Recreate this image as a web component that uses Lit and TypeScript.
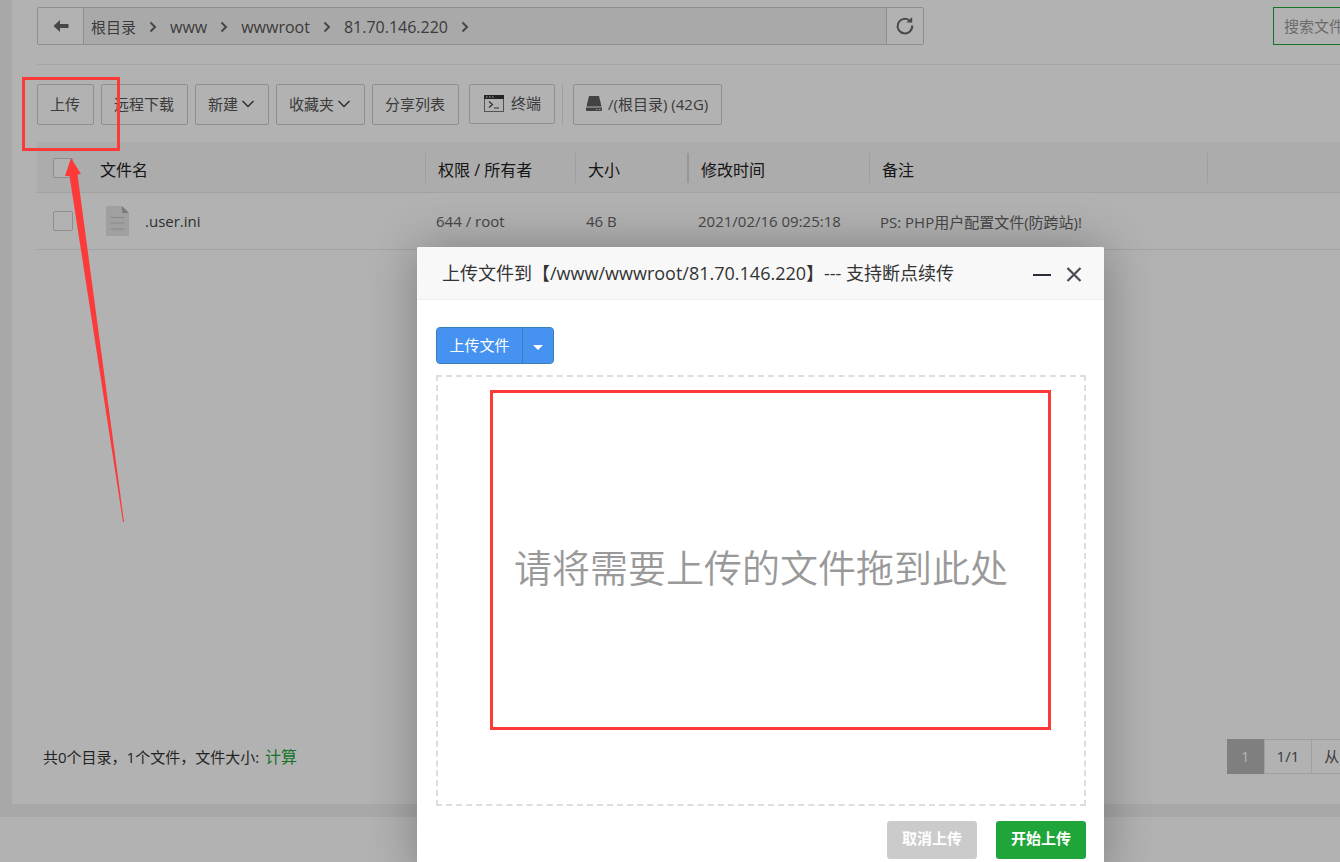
import { LitElement, html, css, svg } from "lit";
import { customElement, property, state } from "lit/decorators.js";

const chevronRight = html`<svg class="sep" width="8" height="12" viewBox="0 0 8 12" aria-hidden="true">
  <path d="M1.5 1.5 6 6 1.5 10.5" fill="none" stroke="#666" stroke-width="2" />
</svg>`;

const chevronDown = html`<svg class="caret" width="14" height="10" viewBox="0 0 14 10" aria-hidden="true">
  <path d="M1.5 2 7 7.5 12.5 2" fill="none" stroke="#444" stroke-width="1.5" />
</svg>`;

interface FileRow {
  name: string;
  owner: string;
  size: string;
  time: string;
  note: string;
}

const fontStack = css`"Open Sans", "Noto Sans CJK SC", sans-serif`;

@customElement("upload-dialog")
export class UploadDialog extends LitElement {
  @property() path = "";

  static styles = css`
    :host {
      display: block;
      box-sizing: border-box;
      background: #fff;
      border-radius: 2px;
      box-shadow: 1px 1px 50px rgba(0, 0, 0, 0.3);
      font-family: ${fontStack};
      color: #333;
    }
    button {
      font: inherit;
      margin: 0;
      padding: 0;
      border: 0;
      cursor: pointer;
    }
    header {
      display: flex;
      align-items: center;
      height: 52px;
      padding: 0 19px 0 25px;
      background: #f8f8f8;
      border-bottom: 1px solid #eee;
      border-radius: 2px 2px 0 0;
    }
    h2 {
      flex: 1;
      margin: 0;
      font-size: 18px;
      font-weight: 400;
      line-height: 52px;
      white-space: nowrap;
    }
    .tool {
      display: flex;
      align-items: center;
      justify-content: center;
      width: 22px;
      height: 22px;
      margin-left: 10px;
      background: none;
    }
    .body {
      padding: 27px 18px 16px 19px;
    }
    .split {
      display: inline-flex;
      vertical-align: top;
      height: 37px;
      box-sizing: border-box;
      border: 1px solid #3a7fb5;
      border-radius: 4px;
      background: #4592f0;
      overflow: hidden;
    }
    .split button {
      color: #fff;
      background: #4592f0;
      font-size: 15px;
    }
    .pick {
      width: 85px;
      padding-bottom: 2px;
    }
    .more {
      display: flex;
      align-items: center;
      justify-content: center;
      width: 31px;
    }
    .split .more {
      padding-top: 3px;
      border-left: 1px solid #3a7fb5;
    }
    .drop {
      display: flex;
      align-items: center;
      justify-content: center;
      box-sizing: border-box;
      height: 431px;
      margin-top: 11px;
      padding: 0 0 50px;
      border: 2px dashed #ddd;
      color: #999;
      font-size: 38px;
      font-weight: 350;
      white-space: nowrap;
    }
    footer {
      display: flex;
      justify-content: flex-end;
      gap: 19px;
      margin-top: 15px;
    }
    footer button {
      width: 90px;
      height: 38px;
      padding-bottom: 5px;
      border-radius: 3px;
      color: #fff;
      font-size: 15px;
      font-weight: 700;
      background: #20a53a;
    }
    footer .cancel {
      background: #cbcbcb;
    }
  `;

  render() {
    return html`
      <header>
        <h2>上传文件到【${this.path}】--- 支持断点续传</h2>
        <button class="tool" aria-label="最小化">
          <svg width="20" height="20" viewBox="0 0 20 20">
            <path d="M1 12H19" stroke="#2d2c3b" stroke-width="2" />
          </svg>
        </button>
        <button class="tool" aria-label="关闭">
          <svg width="20" height="20" viewBox="0 0 20 20">
            <path d="M3.5 5 16.5 18M16.5 5 3.5 18" stroke="#4b4a57" stroke-width="2.2" />
          </svg>
        </button>
      </header>
      <div class="body">
        <div class="split">
          <button class="pick">上传文件</button>
          <button class="more" aria-label="更多上传方式">
            <svg width="10" height="5" viewBox="0 0 10 5"><path d="M0 0H10L5 5Z" fill="#fff" /></svg>
          </button>
        </div>
        <div class="drop">请将需要上传的文件拖到此处</div>
        <footer>
          <button class="cancel">取消上传</button>
          <button>开始上传</button>
        </footer>
      </div>
    `;
  }
}

@customElement("app-root")
export class AppRoot extends LitElement {
  @state() private crumbs = ["根目录", "www", "wwwroot", "81.70.146.220"];
  @state() private files: FileRow[] = [
    {
      name: ".user.ini",
      owner: "644 / root",
      size: "46 B",
      time: "2021/02/16 09:25:18",
      note: "PS: PHP用户配置文件(防跨站)!",
    },
  ];

  static styles = css`
    :host {
      display: flex;
      flex-direction: column;
      position: relative;
      height: 100vh;
      overflow: hidden;
      background: #f1f1f1;
      font-family: ${fontStack};
      font-size: 15px;
      color: #555;
    }
    button,
    input {
      font: inherit;
      color: inherit;
      margin: 0;
    }
    a {
      color: inherit;
      text-decoration: none;
    }
    .panel {
      flex: 1;
      display: flex;
      flex-direction: column;
      box-sizing: border-box;
      width: calc(100% + 148px);
      margin: 0 0 13px 12px;
      padding: 7px 0 30px 25px;
      background: #fff;
    }
    .top {
      display: flex;
      justify-content: space-between;
      padding-bottom: 19px;
      border-bottom: 1px solid #ececec;
    }
    .path {
      display: flex;
      box-sizing: border-box;
      width: 887px;
      height: 38px;
      border: 1px solid #ccc;
      border-radius: 2px;
      background: #f3f3f3;
    }
    .path button {
      display: flex;
      align-items: center;
      justify-content: center;
      padding: 0;
      border: 0;
      background: #fff;
    }
    .path .back {
      width: 46px;
      border-right: 1px solid #ccc;
    }
    .path .reload {
      width: 37px;
      border-left: 1px solid #ccc;
    }
    .crumbs {
      flex: 1;
      display: flex;
      align-items: center;
      gap: 13px;
      padding: 1px 0 0 7px;
      font-size: 16px;
    }
    .crumbs a:first-child {
      font-size: 15px;
    }
    .search {
      box-sizing: border-box;
      width: 227px;
      height: 38px;
      padding: 0 10px;
      border: 1px solid #20a53a;
      outline: 0;
      background: #fff;
    }
    .search::placeholder {
      color: #999;
      opacity: 1;
    }
    .tools {
      display: flex;
      gap: 7px;
      padding: 19px 0 17px;
    }
    .btn {
      display: flex;
      align-items: center;
      box-sizing: border-box;
      height: 41px;
      padding: 0 13px 2px 12px;
      border: 1px solid #ccc;
      border-radius: 2px;
      background: #fff;
      white-space: nowrap;
      line-height: 20px;
    }
    .btn .caret {
      margin-left: 3px;
    }
    .term {
      height: 40px;
      margin-left: 3px;
      padding-left: 14px;
      gap: 7px;
    }
    .rule {
      width: 1px;
      margin-right: 3px;
      background: #e6e6e6;
    }
    .disk {
      gap: 6px;
    }
    table {
      width: 100%;
      table-layout: fixed;
      border-collapse: collapse;
    }
    .c-check {
      width: 57px;
    }
    .c-name {
      width: 331px;
    }
    .c-owner {
      width: 150px;
    }
    .c-size {
      width: 112px;
    }
    .c-time {
      width: 182px;
    }
    .c-note {
      width: 338px;
    }
    th,
    td {
      padding: 0;
      text-align: left;
      font-weight: 400;
      border-bottom: 1px solid #e8e8e8;
      white-space: nowrap;
    }
    th {
      box-sizing: border-box;
      height: 50px;
      padding-top: 3px;
      background: #f6f6f6;
      color: #222;
      font-size: 16px;
    }
    td {
      height: 56px;
      color: #666;
    }
    th:first-child,
    td:first-child {
      padding-left: 16px;
    }
    .head {
      height: 30px;
      line-height: 34px;
      padding-left: 12px;
      border-left: 1px solid #e2e2e2;
    }
    .head.first {
      padding-left: 6px;
      border-left: 0;
    }
    .head.active {
      border-left-width: 2px;
      border-color: #d8d8d8;
    }
    .cell {
      padding: 1px 0 0 11px;
    }
    .file {
      display: flex;
      align-items: center;
      gap: 16px;
      padding-left: 12px;
      color: #444;
    }
    .box {
      display: block;
      appearance: none;
      width: 20px;
      height: 20px;
      border: 1px solid #ccc;
      border-radius: 2px;
      background: #fff;
    }
    .status {
      display: flex;
      justify-content: space-between;
      align-items: center;
      margin-top: auto;
      padding-left: 6px;
      color: #333;
    }
    .status p {
      margin: 0;
      padding-bottom: 2px;
    }
    .status a {
      margin-left: 2px;
      color: #20a53a;
      font-size: 16px;
    }
    .pager {
      display: flex;
      box-sizing: border-box;
      width: 273px;
      height: 35px;
      line-height: 33px;
      border: 1px solid #e6e6e6;
      border-left: 0;
      color: #555;
    }
    .pager span {
      padding: 0 12px;
      border-left: 1px solid #e6e6e6;
      white-space: nowrap;
    }
    .pager .on {
      margin: -1px 0;
      line-height: 35px;
      padding: 0 14px;
      border: 0;
      background: #b7b7b7;
      color: #fff;
    }
    .foot {
      height: 45px;
      background: #fff;
    }
    .shade {
      position: absolute;
      inset: 0;
      background: rgba(0, 0, 0, 0.3);
    }
    upload-dialog {
      position: absolute;
      left: 417px;
      top: 247px;
      width: 687px;
    }
    .mark {
      position: absolute;
      box-sizing: border-box;
      border: 3px solid #fc3a3a;
      pointer-events: none;
    }
    .mark-upload {
      left: 22px;
      top: 77px;
      width: 98px;
      height: 74px;
    }
    .mark-drop {
      left: 490px;
      top: 390px;
      width: 561px;
      height: 340px;
    }
    .arrow {
      position: absolute;
      left: 60px;
      top: 155px;
      pointer-events: none;
    }
  `;

  private renderRow(f: FileRow) {
    return html`<tr>
      <td><input class="box" type="checkbox" aria-label=${f.name} /></td>
      <td>
        <div class="file">
          <svg width="23" height="30" viewBox="0 0 23 30" aria-hidden="true">
            <path d="M1 0H16L23 7V29a1 1 0 0 1-1 1H1a1 1 0 0 1-1-1V1a1 1 0 0 1 1-1Z" fill="#e6e6e6" />
            <path d="M16 0 23 7H16Z" fill="#b0b0b0" />
            <path d="M5 11.5H18M5 17H18M5 23H18" stroke="#c4c4c4" stroke-width="1.2" stroke-linecap="round" />
          </svg>
          <span>${f.name}</span>
        </div>
      </td>
      <td><div class="cell">${f.owner}</div></td>
      <td><div class="cell">${f.size}</div></td>
      <td><div class="cell">${f.time}</div></td>
      <td><div class="cell">${f.note}</div></td>
      <td></td>
    </tr>`;
  }

  render() {
    return html`
      <main class="panel">
        <div class="top">
          <div class="path">
            <button class="back" aria-label="后退">
              <svg width="16" height="14" viewBox="0 0 16 14">
                <path d="M0.5 7 7 1V5H15.5V9H7V13Z" fill="#666" />
              </svg>
            </button>
            <nav class="crumbs">${this.crumbs.map((c) => html`<a href="#">${c}</a>${chevronRight}`)}</nav>
            <button class="reload" aria-label="刷新">
              <svg width="20" height="20" viewBox="0 0 20 20">
                <path d="M17.2 9.5A7.3 7.3 0 1 1 14.2 4.2" fill="none" stroke="#6a6a6a" stroke-width="2" />
                <path d="M17.2 1V6.6H11.4Z" fill="#6a6a6a" />
              </svg>
            </button>
          </div>
          <input class="search" type="text" placeholder="搜索文件/目录" aria-label="搜索文件/目录" />
        </div>

        <div class="tools">
          <button class="btn">上传</button>
          <button class="btn">远程下载</button>
          <button class="btn">新建${chevronDown}</button>
          <button class="btn">收藏夹${chevronDown}</button>
          <button class="btn">分享列表</button>
          <button class="btn term">
            <svg width="20" height="17" viewBox="0 0 20 17" aria-hidden="true">
              <rect x="0.5" y="0.5" width="19" height="16" fill="#fff" stroke="#777" />
              <path d="M0 0H20V4H0Z" fill="#333" />
              <path d="M2 2H3.5M5 2H6.5M8 2H9.5" stroke="#fff" />
              <path d="M5 6.5 8.5 9.5 5 12.5M10 13H15" fill="none" stroke="#444" stroke-width="1.2" />
            </svg>
            终端
          </button>
          <span class="rule"></span>
          <button class="btn disk">
            <svg width="16" height="16" viewBox="0 0 16 16" aria-hidden="true">
              <path d="M3 0H13L15.5 10.5H0.5Z" fill="#606060" />
              <path d="M0 11.5H16V14a1 1 0 0 1-1 1H1a1 1 0 0 1-1-1Z" fill="#606060" />
              <path d="M10 13.5H11.5M13 13.5H14.5" stroke="#ddd" stroke-width="1.2" />
            </svg>
            /(根目录) (42G)
          </button>
        </div>

        <table>
          <colgroup>
            <col class="c-check" />
            <col class="c-name" />
            <col class="c-owner" />
            <col class="c-size" />
            <col class="c-time" />
            <col class="c-note" />
            <col />
          </colgroup>
          <thead>
            <tr>
              <th><input class="box" type="checkbox" aria-label="全选" /></th>
              <th><div class="head first">文件名</div></th>
              <th><div class="head">权限 / 所有者</div></th>
              <th><div class="head">大小</div></th>
              <th><div class="head active">修改时间</div></th>
              <th><div class="head">备注</div></th>
              <th><div class="head"></div></th>
            </tr>
          </thead>
          <tbody>
            ${this.files.map((f) => this.renderRow(f))}
          </tbody>
        </table>

        <div class="status">
          <p>共0个目录，1个文件，文件大小: <a href="#">计算</a></p>
          <div class="pager"><span class="on">1</span><span>1/1</span><span>从1-1条</span></div>
        </div>
      </main>
      <div class="foot"></div>

      <div class="shade"></div>
      <upload-dialog path="/www/wwwroot/81.70.146.220"></upload-dialog>

      <div class="mark mark-upload"></div>
      <div class="mark mark-drop"></div>
      <svg class="arrow" width="70" height="370" viewBox="60 155 70 370" aria-hidden="true">
        ${svg`<path d="M71 158 81 174 77.5 174.5 124 522H123L69.5 176 65 176Z" fill="#fc3a3a" />`}
      </svg>
    `;
  }
}
